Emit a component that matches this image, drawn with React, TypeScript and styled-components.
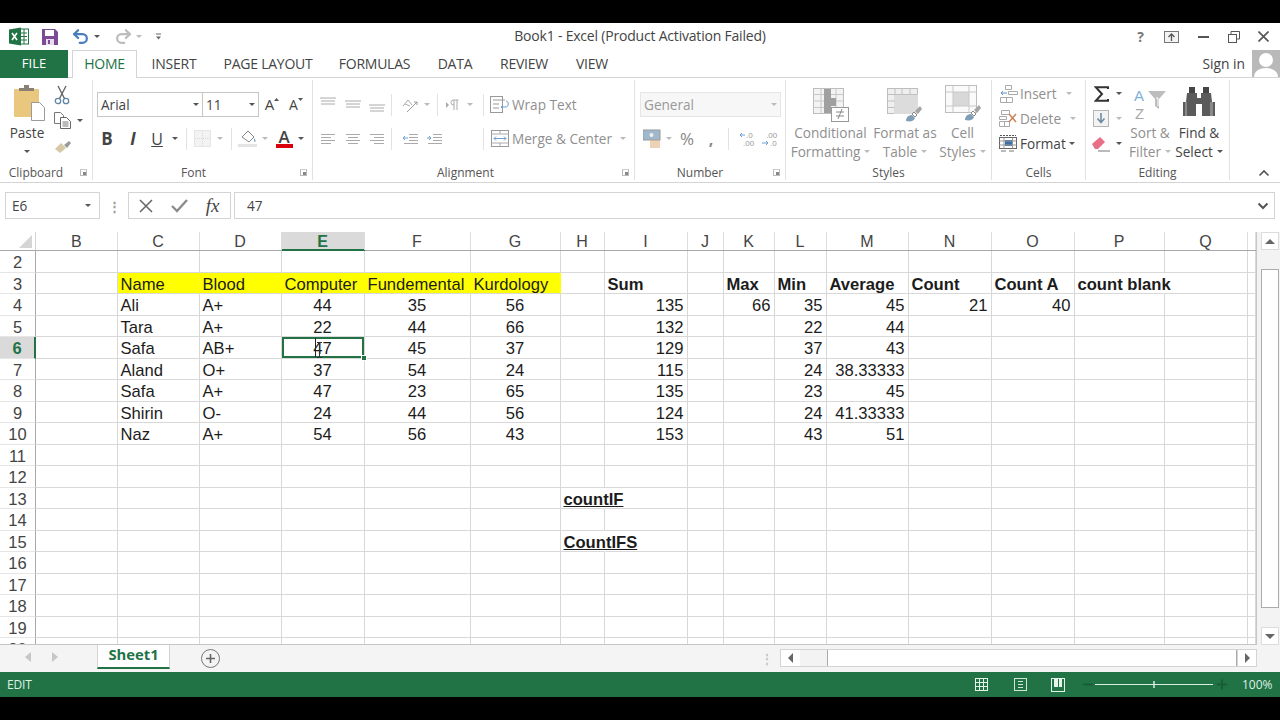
import React from "react";
import styled, { createGlobalStyle } from "styled-components";
import { Undo2, Redo2 } from "lucide-react";

const GREEN = "#217346";
const UI = `"Open Sans", "Noto Sans", "Liberation Sans", sans-serif`;
const SHEET = `"Liberation Sans", Arial, sans-serif`;

const Global = createGlobalStyle`
  html, body { margin: 0; padding: 0; background: #000; }
  * { box-sizing: border-box; }
`;

const Screen = styled.div`
  width: 1280px; height: 720px; background: #000;
  padding: 23px 0; overflow: hidden;
`;
const Win = styled.div`
  height: 674px; background: #fff; display: flex; flex-direction: column;
  font-family: ${UI}; color: #444; position: relative;
`;

/* ---------- Title bar ---------- */
const TitleBar = styled.div`
  height: 27px; flex: none; display: grid; grid-template-columns: 1fr 260px 1fr; align-items: center;
`;
const Qat = styled.div`display: flex; align-items: center; padding-left: 9px; height: 100%;`;
const Title = styled.div`
  font-size: 14px; letter-spacing: -0.2px; color: #444; text-align: center; white-space: nowrap; padding-bottom: 2px;
`;
const WinBtns = styled.div`display: flex; align-items: center; justify-content: flex-end; height: 100%; padding-right: 2px;`;
const Help = styled.span`font-size: 14px; font-weight: 700; color: #777; margin-right: 10px;`;

/* ---------- Tabs ---------- */
const TabRow = styled.div`
  height: 28px; flex: none; display: flex; align-items: stretch; border-bottom: 1px solid #d4d4d4; position: relative;
`;
const FileTab = styled.div`
  width: 68px; height: 28px; background: ${GREEN}; color: #fff; font-size: 13px; padding-bottom: 2px;
  display: flex; align-items: center; justify-content: center; margin-right: 4px;
`;
const Tab = styled.div<{ $w: number; $active?: boolean }>`
  width: ${(p) => p.$w}px; height: 28px; font-size: 14px; letter-spacing: -0.25px; padding-bottom: 2px;
  display: flex; align-items: center; justify-content: center;
  color: ${(p) => (p.$active ? GREEN : "#444")};
  background: ${(p) => (p.$active ? "#fff" : "transparent")};
  border: ${(p) => (p.$active ? "1px solid #d4d4d4" : "none")};
  border-bottom: none;
`;
const SignIn = styled.div`
  margin-left: auto; display: flex; align-items: center; gap: 7px; font-size: 13.8px; color: #444;
`;
const Avatar = styled.div`width: 28px; height: 27px; background: #b9b9b9; overflow: hidden; display: flex;`;

/* ---------- Ribbon ---------- */
const Ribbon = styled.div`
  height: 105px; flex: none; display: flex; border-bottom: 1px solid #d4d4d4; position: relative;
`;
const Group = styled.div<{ $w: number }>`
  width: ${(p) => p.$w}px; flex: none; height: 100px; display: flex; flex-direction: column;
  border-right: 1px solid #e2e2e2; margin-top: 2px;
`;
const GroupBody = styled.div<{ $top?: number; $left?: number; $row?: boolean }>`
  height: 84px; flex: none; display: flex; flex-direction: ${(p) => (p.$row ? "row" : "column")};
  padding-top: ${(p) => p.$top ?? 12}px; padding-left: ${(p) => p.$left ?? 0}px;
`;
const GroupLabel = styled.div<{ $pr?: number }>`
  height: 17px; flex: none; font-size: 12px; color: #555; position: relative; text-align: center; line-height: 17px;
  padding-right: ${(p) => p.$pr ?? 0}px;
`;
const Launcher = styled.span`
  position: absolute; right: 5px; top: 5px; width: 7px; height: 7px; border: 1px solid #bbb; border-top-color: #ccc;
  &::after { content: ""; position: absolute; right: 0; bottom: 0; width: 3px; height: 3px; background: #888; }
`;
const ToolRow = styled.div<{ $mt?: number; $pl?: number }>`
  height: 25px; display: flex; align-items: center; flex: none;
  margin-top: ${(p) => p.$mt ?? 0}px; padding-left: ${(p) => p.$pl ?? 0}px;
`;
const Slot = styled.span<{ $w: number }>`
  width: ${(p) => p.$w}px; flex: none; height: 100%; display: inline-flex; align-items: center; justify-content: center;
`;
const Sep = styled.span`width: 1px; height: 22px; background: #e2e2e2;`;
const Caret = styled.span<{ $dim?: boolean }>`
  display: inline-block; width: 0; height: 0; flex: none;
  border-left: 3px solid transparent; border-right: 3px solid transparent;
  border-top: 3px solid ${(p) => (p.$dim ? "#bbb" : "#555")};
`;
const Combo = styled.div<{ $w: number; $dim?: boolean }>`
  width: ${(p) => p.$w}px; height: 25px; flex: none; border: 1px solid ${(p) => (p.$dim ? "#e6e6e6" : "#c6c6c6")};
  background: ${(p) => (p.$dim ? "#f7f7f7" : "#fff")};
  display: flex; align-items: center; justify-content: space-between; padding: 0 3px;
  font-size: 13.6px; color: ${(p) => (p.$dim ? "#999" : "#444")};
  & + & { border-left: none; }
`;
const FontGlyph = styled.span<{ $bold?: boolean; $italic?: boolean; $under?: boolean; $size?: number; $serif?: boolean; $color?: string }>`
  font-family: ${(p) => (p.$serif ? `"Liberation Serif", serif` : UI)};
  font-size: ${(p) => p.$size ?? 15}px; line-height: 1; color: ${(p) => p.$color ?? "#444"};
  font-weight: ${(p) => (p.$bold ? 700 : 400)}; font-style: ${(p) => (p.$italic ? "italic" : "normal")};
  text-decoration: ${(p) => (p.$under ? "underline" : "none")};
`;
const ColorLetter = styled.span`
  display: flex; flex-direction: column; align-items: center; font-size: 17px; line-height: 15px; color: #444; font-weight: 600;
  &::after { content: ""; width: 17px; height: 4px; background: #d8000c; margin-top: 0; }
`;
const GrowWrap = styled.span`display: inline-flex; align-items: flex-start;`;
const RowLabel = styled.span<{ $dim?: boolean }>`
  font-size: 13.6px; white-space: nowrap; color: ${(p) => (p.$dim ? "#8f8f8f" : "#444")};
`;
const BigBtn = styled.div<{ $w: number }>`
  width: ${(p) => p.$w}px; flex: none; display: flex; flex-direction: column; align-items: center;
`;
const BigIcon = styled.div<{ $h?: number; $pt?: number; $pl?: number }>`
  height: ${(p) => p.$h ?? 38}px; flex: none; display: flex; align-items: flex-start; justify-content: center;
  padding-top: ${(p) => p.$pt ?? 0}px; padding-left: ${(p) => p.$pl ?? 0}px;
`;
const BigLine = styled.div<{ $dim?: boolean }>`
  height: 19px; line-height: 19px; font-size: 13.6px; white-space: nowrap; display: flex; align-items: center; gap: 4px;
  color: ${(p) => (p.$dim ? "#8f8f8f" : "#444")};
`;
const SmallCol = styled.div<{ $w: number; $mt?: number }>`
  width: ${(p) => p.$w}px; flex: none; display: flex; flex-direction: column; margin-top: ${(p) => p.$mt ?? 0}px;
`;
const Chevron = styled.div`position: absolute; left: 1258px; top: 91px; display: flex;`;

/* ---------- Formula bar ---------- */
const FormulaBar = styled.div`
  height: 27px; margin-top: 9px; flex: none; display: flex; align-items: stretch; padding-left: 5px; padding-right: 5px;
`;
const NameBox = styled.div`
  width: 95px; border: 1px solid #d4d4d4; display: flex; align-items: center; justify-content: space-between;
  padding: 0 8px 0 6px; font-size: 13.6px; color: #444;
`;
const Dots = styled.div`
  width: 28px; display: flex; align-items: center; justify-content: center; color: #999; font-size: 13px; font-weight: 700;
`;
const FxBox = styled.div`width: 103px; border: 1px solid #d4d4d4; display: flex; align-items: center;`;
const FormulaInput = styled.div`
  flex: 1; margin-left: 3px; border: 1px solid #d4d4d4; display: flex; align-items: center; justify-content: space-between;
  padding: 0 5px 0 12px; font-size: 13.6px; color: #444;
`;

/* ---------- Sheet ---------- */
const SheetArea = styled.div`height: 413px; margin-top: 13px; flex: none; display: flex;`;
const Grid = styled.div`
  width: 1257px; height: 413px; flex: none; display: flex; flex-direction: column; overflow: hidden;
  font-family: ${SHEET};
  border-right: 1px solid #c6c6c6; border-bottom: 1px solid #c6c6c6;
`;
const HeadRow = styled.div`height: 19px; flex: none; display: flex; border-bottom: 1px solid #a9a9a9;`;
const Corner = styled.div`
  width: 36px; flex: none; position: relative; border-right: 1px solid #d4d4d4;
  &::after { content: ""; position: absolute; right: 3px; bottom: 2px; width: 0; height: 0;
    border-left: 13px solid transparent; border-bottom: 13px solid #d5d5d5; }
`;
const ColHead = styled.div<{ $w: number; $sel?: boolean }>`
  width: ${(p) => p.$w}px; flex: none; display: flex; align-items: center; justify-content: center; padding-top: 1px;
  font-size: 16px; color: ${(p) => (p.$sel ? GREEN : "#444")}; font-weight: ${(p) => (p.$sel ? 700 : 400)};
  background: ${(p) => (p.$sel ? "#dadada" : "transparent")};
  border-right: 1px solid #dcdcdc;
  box-shadow: ${(p) => (p.$sel ? `0 1px 0 ${GREEN}, inset 0 -1px 0 ${GREEN}` : "none")};
  position: relative;
`;
const Row = styled.div`height: 21.5px; flex: none; display: flex;`;
const RowHead = styled.div<{ $sel?: boolean }>`
  width: 36px; flex: none; display: flex; align-items: center; justify-content: center; padding-top: 3px;
  font-size: 16.5px; color: ${(p) => (p.$sel ? GREEN : "#444")}; font-weight: ${(p) => (p.$sel ? 700 : 400)};
  background: ${(p) => (p.$sel ? "#dadada" : "#fff")};
  border-right: ${(p) => (p.$sel ? `2px solid ${GREEN}` : "1px solid #a9a9a9")};
  border-bottom: 1px solid #e6e6e6;
`;
const Cell = styled.div<{ $w: number; $a?: string; $b?: boolean; $y?: boolean; $u?: boolean; $open?: boolean; $sel?: boolean }>`
  width: ${(p) => p.$w}px; flex: none; display: flex; align-items: center; position: relative;
  white-space: nowrap; font-size: 16.6px; color: #1c1c1c; padding: 4px 3px 0;
  justify-content: ${(p) => (p.$a === "c" ? "center" : p.$a === "r" ? "flex-end" : "flex-start")};
  font-weight: ${(p) => (p.$b ? 700 : 400)};
  text-decoration: ${(p) => (p.$u ? "underline" : "none")};
  background: ${(p) => (p.$y ? "#ffff00" : "transparent")};
  border-right: 1px solid ${(p) => (p.$y || p.$open ? "transparent" : "#d8d8d8")};
  border-bottom: 1px solid #d8d8d8;
  box-shadow: ${(p) => (p.$sel ? `inset 0 0 0 2px ${GREEN}` : "none")};
`;
const Handle = styled.span`
  position: absolute; right: -3px; bottom: -3px; width: 6px; height: 6px; background: ${GREEN}; border: 1px solid #fff; z-index: 2;
`;
const TextCaret = styled.span`position: absolute; left: 33px; top: 1px; width: 1.5px; height: 19px; background: #222;`;
const IBeam = styled.svg`position: absolute; left: 34px; top: 5px;`;

/* ---------- Scrollbars ---------- */
const VScroll = styled.div`
  width: 23px; flex: none; height: 413px; background: #f3f3f3; display: flex; flex-direction: column; align-items: center;
  padding-left: 3px;
`;
const ScrollBtn = styled.div<{ $mt?: number }>`
  width: 18px; height: 18px; flex: none; background: #fff; border: 1px solid #dcdcdc; margin-top: ${(p) => p.$mt ?? 0}px;
  display: flex; align-items: center; justify-content: center;
`;
const ArrowUp = styled.span`width: 0; height: 0; border-left: 5px solid transparent; border-right: 5px solid transparent; border-bottom: 5px solid #666;`;
const ArrowDown = styled.span`width: 0; height: 0; border-left: 5px solid transparent; border-right: 5px solid transparent; border-top: 5px solid #666;`;
const VThumb = styled.div`width: 18px; height: 339px; flex: none; background: #fff; border: 1px solid #ababab; margin-top: 19px;`;

const SheetBar = styled.div`height: 27px; flex: none; display: flex; background: #f4f4f4;`;
const SheetNav = styled.div`width: 97px; flex: none; display: flex; align-items: center; padding-left: 25px; gap: 21px; height: 24px;`;
const NavArrow = styled.span<{ $right?: boolean }>`
  width: 0; height: 0; border-top: 5px solid transparent; border-bottom: 5px solid transparent;
  ${(p) => (p.$right ? "border-left: 6px solid #c6c6c6;" : "border-right: 6px solid #c6c6c6;")}
`;
const SheetTab = styled.div`
  width: 73px; height: 24px; flex: none; background: #fff; color: ${GREEN}; font-weight: 700; font-size: 14.8px; padding-bottom: 4px;
  border-left: 1px solid #d4d4d4; border-right: 1px solid #d4d4d4; border-bottom: 2px solid ${GREEN};
  display: flex; align-items: center; justify-content: center;
`;
const AddSheet = styled.div`
  width: 19px; height: 19px; margin: 4px 0 0 31px; border: 1px solid #777; border-radius: 50%; background: #f4f4f4; flex: none;
  display: flex; align-items: center; justify-content: center;
`;
const TabDots = styled.div`margin-left: 541px; width: 19px; color: #c4c4c4; font-size: 12px; font-weight: 700; display: flex; align-items: center; height: 26px;`;
const HScroll = styled.div`width: 477px; height: 18px; margin-top: 4px; flex: none; display: flex; align-items: stretch; border: 1px solid #d4d4d4; border-left: none; background: #f3f3f3;`;
const HBtn = styled.div<{ $w: number }>`width: ${(p) => p.$w}px; flex: none; display: flex; align-items: center; justify-content: center; background: #fff; border-left: 1px solid #d4d4d4;`;
const HGap = styled.div`width: 27px; flex: none;`;
const HThumb = styled.div`flex: 1; background: #fff; border: 1px solid #ababab; border-width: 0 1px;`;
const SmallLeft = styled.span`width: 0; height: 0; border-top: 5px solid transparent; border-bottom: 5px solid transparent; border-right: 5px solid #666;`;
const SmallRight = styled.span`width: 0; height: 0; border-top: 5px solid transparent; border-bottom: 5px solid transparent; border-left: 5px solid #666;`;

/* ---------- Status ---------- */
const Status = styled.div`
  height: 25px; flex: none; background: ${GREEN}; color: #dff0e6; display: flex; align-items: center; padding-left: 7px; font-size: 12px;
`;
const StatusText = styled.span`width: 958px; flex: none; letter-spacing: -0.2px;`;
const ViewSlot = styled.span<{ $w: number }>`width: ${(p) => p.$w}px; flex: none; display: flex; justify-content: center;`;
const ZoomPct = styled.span`margin-left: 15px; font-size: 12px;`;

/* ---------- Icons (drawings) ---------- */
const S = ({ w, h, children }: { w: number; h: number; children: React.ReactNode }) => (
  <svg width={w} height={h} viewBox={`0 0 ${w} ${h}`} fill="none" style={{ display: "block", flex: "none" }}>{children}</svg>
);
const ExcelLogo = () => (
  <S w={20} h={19}>
    <rect x={10} y={2} width={9.5} height={15} fill="#fff" stroke={GREEN} />
    <path d="M12 6h6M12 9.5h6M12 13h6M15 2v15" stroke={GREEN} />
    <path d="M0 2.5 12 .5v18L0 16.5z" fill={GREEN} />
    <path d="M3 6l5 7M8 6l-5 7" stroke="#fff" strokeWidth={1.6} />
  </S>
);
const SaveIcon = () => (
  <S w={16} h={16}>
    <path d="M0 0h13l3 3v13H0z" fill="#7d4a96" />
    <rect x={3} y={1} width={9} height={6} fill="#fff" />
    <rect x={4} y={10} width={8} height={6} fill="#e8dcef" />
    <rect x={6} y={11} width={2} height={4} fill="#7d4a96" />
  </S>
);
const Brush = ({ x = 0, y = 0 }: { x?: number; y?: number }) => (
  <g transform={`translate(${x} ${y})`}>
    <path d="M2 13c0-4 3-6 6-6l3 3c-1 3-4 4-9 3z" fill="#7f9fb8" />
    <path d="M8 6l2-2 3 3-2 2z" fill="#fff" stroke="#888" />
    <path d="M11 3l5-5 2 3-4 5z" fill="#a5a5a5" />
  </g>
);
const TableGrid = ({ dark }: { dark?: boolean }) => (
  <g>
    <rect x={.5} y={.5} width={30} height={25} fill="#f3f3f3" stroke="#bdbdbd" />
    <path d="M.5 6.5h30M.5 13h30M.5 19.5h30M8 .5v25M15 .5v25M23 .5v25" stroke="#c8c8c8" />
    {dark && <path d="M11 1h7v9h5v8h-5v7h-7z" fill="#a0a0a0" />}
  </g>
);
const CondIcon = () => (
  <S w={36} h={34}>
    <TableGrid dark />
    <rect x={18.5} y={19.5} width={17} height={14} fill="#fff" stroke="#999" />
    <path d="M23 24h8M23 28h8M29 21l-4 10" stroke="#888" />
  </S>
);
const FmtTableIcon = () => (
  <S w={36} h={34}>
    <rect x={.5} y={.5} width={30} height={25} fill="#efefef" stroke="#bdbdbd" />
    <rect x={7} y={6} width={24} height={20} fill="#dcdcdc" />
    <path d="M.5 6.5h30M.5 13h7M.5 19.5h7M8 .5v6M15 .5v6M23 .5v6" stroke="#c0c0c0" />
    <Brush x={17} y={20} />
  </S>
);
const CellStyleIcon = () => (
  <S w={36} h={36}>
    <rect x={.5} y={.5} width={31} height={27} fill="#fafafa" stroke="#bdbdbd" />
    <rect x={8} y={7} width={16} height={14} fill="#d8d8d8" />
    <path d="M8 .5v27M24 .5v27M.5 7h31M.5 21h31" stroke="#c8c8c8" />
    <Brush x={18} y={22} />
  </S>
);
const PasteIcon = () => (
  <S w={33} h={36}>
    <rect x={1} y={4} width={25} height={28} rx={1} fill="#e9c77f" />
    <path d="M6 6V3h5V0h5v3h5v3z" fill="#8a8073" />
    <path d="M18.5 17.5h8l5 5v13h-13z" fill="#fff" stroke="#9a9a9a" />
  </S>
);
const Scissors = () => (
  <S w={16} h={20}>
    <circle cx={4} cy={16} r={2.7} stroke="#5f86a8" strokeWidth={1.3} />
    <circle cx={12} cy={16} r={2.7} stroke="#5f86a8" strokeWidth={1.3} />
    <path d="M5.5 13.5 12 1M10.5 13.5 4 1" stroke="#666" strokeWidth={1.4} />
  </S>
);
const CopyIcon = () => (
  <S w={17} h={17}>
    <path d="M.5.5h6l3 3v8h-9z" fill="#fff" stroke="#777" />
    <path d="M6.5 5.5h6l4 4v7h-10z" fill="#fff" stroke="#666" />
    <path d="M8.5 10h6M8.5 12h6M8.5 14h6" stroke="#777" />
  </S>
);
const PainterIcon = () => (
  <S w={18} h={14}>
    <path d="M1 9l6-6 5 5-6 5z" fill="#d6c7a6" />
    <path d="M10 5l5-4 2 2-4 5z" fill="#999" />
  </S>
);
const AlignV = ({ top }: { top: number }) => (
  <S w={18} h={20}>
    <path d={`M1 ${top}h16M2 ${top + 3}h14M2 ${top + 6}h14`} stroke="#aaa" />
  </S>
);
const AlignH = ({ m }: { m: "l" | "c" | "r" }) => {
  const s = m === "l" ? [1, 1, 1, 1] : m === "c" ? [1, 3, 1, 3] : [1, 5, 1, 5];
  const w = [14, 10, 14, 10];
  return (
    <S w={16} h={14}>
      {[2, 5, 8, 11].map((y, i) => (
        <path key={y} d={`M${s[i]} ${y + .5}h${w[i]}`} stroke="#aaa" />
      ))}
    </S>
  );
};
const IndentIcon = ({ flip }: { flip?: boolean }) => (
  <S w={17} h={14}>
    <path d="M7 2.5h9M7 5.5h9M7 8.5h9M2 11.5h14" stroke="#aaa" />
    <path d={flip ? "M1 6h4M3 4l2 2-2 2" : "M6 6H1M3 4 1 6l2 2"} stroke="#6f9ed0" />
  </S>
);
const OrientIcon = () => (
  <S w={18} h={16}>
    <path d="M2 9l5-6 4 5M4 7l5 2" stroke="#aaa" />
    <path d="M6 15 16 5M13 5h3v3" stroke="#999" />
  </S>
);
const ParaIcon = () => (
  <S w={16} h={12}>
    <path d="M1 3l3 3-3 3z" fill="#aaa" />
    <path d="M9 1v10M12 1v10M13.5 1H8.5a2.5 2.5 0 0 0 0 5H9" stroke="#aaa" />
  </S>
);
const WrapIcon = () => (
  <S w={20} h={18}>
    <rect x={.5} y={.5} width={12} height={16} fill="#fff" stroke="#999" />
    <path d="M3 4h12M3 8h6M3 12h6" stroke="#999" />
    <path d="M16 5c3 0 3 6 0 6h-4M13 9l-2 2 2 2" stroke="#6f9ed0" />
  </S>
);
const MergeIcon = () => (
  <S w={19} h={18}>
    <rect x={.5} y={.5} width={17} height={16} fill="#fff" stroke="#999" />
    <path d="M.5 4h17M.5 13h17M9 .5V4M9 13v3.5" stroke="#aaa" />
    <path d="M3 8.5h12M5 6.5 3 8.5l2 2M13 6.5l2 2-2 2" stroke="#6f9ed0" />
  </S>
);
const BordersIcon = () => (
  <S w={17} h={17}>
    <rect x={.5} y={.5} width={16} height={16} stroke="#ccc" strokeDasharray="1 1" />
    <path d="M8.5 1v15M1 8.5h15" stroke="#ccc" strokeDasharray="1 1" />
    <rect x={1} y={1} width={15} height={15} fill="#e7e7e7" opacity={.5} />
  </S>
);
const FillIcon = () => (
  <S w={20} h={19}>
    <path d="M4 8l6-6 6 6-5 5z" fill="#fff" stroke="#888" />
    <path d="M16 9c2 2 2 4 1 4s-1-2-1-4z" fill="#7da7c7" />
    <rect x={0} y={15} width={19} height={3} fill="#e4e4e4" />
  </S>
);
const GrowFont = ({ up }: { up?: boolean }) => (
  <GrowWrap>
    <FontGlyph $size={up ? 15 : 14}>A</FontGlyph>
    <S w={5} h={4}>
      <path d={up ? "M0 4l2.5-3L5 4z" : "M0 0l2.5 3L5 0z"} fill="#555" />
    </S>
  </GrowWrap>
);
const AcctIcon = () => (
  <S w={18} h={20}>
    <rect x={0} y={1} width={17} height={10} fill="#9fb8cc" stroke="#999" />
    <circle cx={8.5} cy={6} r={2} fill="#eee" />
    <path d="M7 12h10M7 14h10M7 16h10M7 18h10" stroke="#d9a46c" />
  </S>
);
const DecIcon = ({ inc }: { inc?: boolean }) => (
  <S w={18} h={18}>
    <text x={inc ? 5 : 7} y={8} fontSize={8} fontFamily={SHEET} fill="#999">{inc ? ".00" : ".0"}</text>
    <text x={inc ? 9 : 4} y={16} fontSize={8} fontFamily={SHEET} fill="#999">{inc ? ".0" : ".00"}</text>
    {inc
      ? <path d="M1 13h6M5 11l2 2-2 2" stroke="#6f9ed0" />
      : <path d="M6 5H1M3 3 1 5l2 2" stroke="#6f9ed0" />}
  </S>
);
const InsertIcon = () => (
  <S w={18} h={18}>
    <path d="M5.5.5h6v4h-6zM.5 12.5h12v5H.5zM6.5 12.5v5M8.5 6.5h9v3h-9z" stroke="#aaa" />
    <path d="M7 8H1M3 6 1 8l2 2" stroke="#5f8fc2" />
  </S>
);
const DeleteIcon = () => (
  <S w={19} h={18}>
    <path d="M2.5.5h8v4h-8zM.5 11.5h10v5H.5zM5.5 11.5v5M.5 6.5h7v3h-7z" stroke="#aaa" />
    <path d="M10 4l7 8M17 4l-7 8" stroke="#c8835e" strokeWidth={1.5} />
  </S>
);
const FormatIcon = () => (
  <S w={19} h={19}>
    <path d="M1 1.5h16" stroke="#555" strokeDasharray="2 1" />
    <rect x={.5} y={3.5} width={17} height={11} fill="#fff" stroke="#666" />
    <rect x={6} y={6} width={7} height={6} fill="#3d6fa5" />
    <path d="M.5 7h17M.5 11h17M5 3.5v11M13.5 3.5v11" stroke="#999" />
    <path d="M2 17h5M10 17h5" stroke="#777" />
  </S>
);
const SigmaIcon = () => (
  <S w={15} h={16}>
    <path d="M14 3V1.3H1.8L8 8 1.8 14.7H14V13" stroke="#333" strokeWidth={2} />
  </S>
);
const FillDown = () => (
  <S w={16} h={17}>
    <rect x={.5} y={.5} width={15} height={16} fill="#f3f3f3" stroke="#b5b5b5" />
    <path d="M8 3v9M4.5 8.5 8 12.5l3.5-4" stroke="#6e8da5" strokeWidth={1.6} />
  </S>
);
const EraserIcon = () => (
  <S w={20} h={16}>
    <path d="M1 8l8-7 5 5-7 7H4z" fill="#e76f86" />
    <path d="M7 15h12" stroke="#777" />
  </S>
);
const SortIcon = () => (
  <S w={34} h={36}>
    <text x={1} y={14} fontSize={15} fontFamily={SHEET} fill="#7fb2d9">A</text>
    <text x={2} y={31.5} fontSize={15} fontFamily={SHEET} fill="#a8a8a8">Z</text>
    <path d="M15 4h18l-7 8v10l-4-3v-7z" fill="#bdbdbd" />
    <path d="M23 11h2v8" stroke="#fff" />
  </S>
);
const BinocIcon = () => (
  <S w={32} h={31}>
    <path d="M6 0h6v6H6zM20 0h6v6h-6z" fill="#444" />
    <path d="M4 6h10v5h4V6h10l1 9h3v14H19V17h-6v12H0V15h3z" fill="#5b5b5b" />
    <path d="M2 15h2v14H2zM27 15h3v14h-3z" fill="#8a8a8a" />
  </S>
);
const ChevronUp = () => (
  <S w={12} h={8}><path d="M1.5 6.5 6 2l4.5 4.5" stroke="#555" strokeWidth={1.6} /></S>
);
const ChevronDown = () => (
  <S w={12} h={8}><path d="M1.5 1.5 6 6l4.5-4.5" stroke="#555" strokeWidth={2} /></S>
);
const CancelIcon = () => (
  <S w={14} h={14}><path d="M1 1l12 12M13 1 1 13" stroke="#666" strokeWidth={1.5} /></S>
);
const EnterIcon = () => (
  <S w={17} h={14}><path d="M1 7l5 5L16 1" stroke="#8c8c8c" strokeWidth={2.4} /></S>
);
const RibbonDisplay = () => (
  <S w={15} h={12}>
    <rect x={.5} y={.5} width={14} height={11} stroke="#777" fill="#f3f3f3" />
    <path d="M7.5 10V3M4.5 6l3-3 3 3" stroke="#555" strokeWidth={1.3} />
  </S>
);
const MinIcon = () => <S w={11} h={4}><path d="M0 2h11" stroke="#555" strokeWidth={2} /></S>;
const RestoreIcon = () => (
  <S w={12} h={12}>
    <path d="M3 3V.5h8.5V8H9" stroke="#555" />
    <rect x={.5} y={3.5} width={8} height={8} stroke="#555" fill="#fff" />
  </S>
);
const CloseIcon = () => <S w={11} h={11}><path d="M.5.5l10 10M10.5.5l-10 10" stroke="#555" strokeWidth={1.6} /></S>;
const CustomizeIcon = () => (
  <S w={7} h={7}>
    <path d="M1 1h5" stroke="#666" />
    <path d="M1 3.5h5L3.5 6.5z" fill="#666" />
  </S>
);
const AvatarFigure = () => (
  <S w={28} h={27}>
    <circle cx={14} cy={10} r={7} fill="#fff" />
    <path d="M2 27c0-6 6-9 12-9s12 3 12 9z" fill="#fff" />
  </S>
);
const Plus = () => <S w={11} h={11}><path d="M5.5 1v9M1 5.5h9" stroke="#666" strokeWidth={1.6} /></S>;
const GridView = () => (
  <S w={13} h={13}><rect x={.5} y={.5} width={12} height={12} stroke="#e4f2e9" /><path d="M4.5 0v13M8.5 0v13M0 4.5h13M0 8.5h13" stroke="#e4f2e9" /></S>
);
const PageView = () => (
  <S w={13} h={13}><rect x={.5} y={.5} width={12} height={12} stroke="#cfe5d6" /><path d="M4 3.5h5M4 6.5h5M4 9.5h5" stroke="#cfe5d6" /></S>
);
const BreakView = () => (
  <S w={14} h={14}><rect x={.5} y={.5} width={13} height={13} stroke="#e4f2e9" /><path d="M3 1h4v8H3zM8 1h3v8H8z" fill="#e4f2e9" /></S>
);
const ZoomSlider = () => (
  <S w={144} h={13}>
    <path d="M0 6.5h10" stroke="#175d36" strokeWidth={2} />
    <path d="M12 6.5h118" stroke="#d8ece0" />
    <path d="M71 3v7" stroke="#d8ece0" strokeWidth={1.5} />
    <path d="M134 6.5h10M139 1.5v10" stroke="#175d36" strokeWidth={2} />
  </S>
);

/* ---------- Data ---------- */
const COLS: [string, number][] = [
  ["B", 81.5], ["C", 82], ["D", 82], ["E", 83], ["F", 106], ["G", 90], ["H", 44], ["I", 83], ["J", 36],
  ["K", 51], ["L", 52], ["M", 82], ["N", 83], ["O", 83], ["P", 90], ["Q", 83], ["", 8.5],
];
type C = { t: string; a?: string; b?: boolean; y?: boolean; u?: boolean; open?: boolean };
const people: [string, string, number, number, number, number, number, string][] = [
  ["Ali", "A+", 44, 35, 56, 135, 35, "45"],
  ["Tara", "A+", 22, 44, 66, 132, 22, "44"],
  ["Safa", "AB+", 47, 45, 37, 129, 37, "43"],
  ["Aland", "O+", 37, 54, 24, 115, 24, "38.33333"],
  ["Safa", "A+", 47, 23, 65, 135, 23, "45"],
  ["Shirin", "O-", 24, 44, 56, 124, 24, "41.33333"],
  ["Naz", "A+", 54, 56, 43, 153, 43, "51"],
];
const cells: Record<string, C> = {
  C3: { t: "Name", y: true }, D3: { t: "Blood", y: true }, E3: { t: "Computer", y: true },
  F3: { t: "Fundemental", y: true }, G3: { t: "Kurdology", y: true },
  I3: { t: "Sum", b: true }, K3: { t: "Max", b: true }, L3: { t: "Min", b: true }, M3: { t: "Average", b: true },
  N3: { t: "Count", b: true }, O3: { t: "Count A", b: true }, P3: { t: "count blank", b: true, open: true },
  K4: { t: "66", a: "r" }, N4: { t: "21", a: "r" }, O4: { t: "40", a: "r" },
  H13: { t: "countIF", b: true, u: true, open: true }, H15: { t: "CountIFS", b: true, u: true, open: true },
};
people.forEach((p, i) => {
  const r = i + 4;
  cells[`C${r}`] = { t: p[0] };
  cells[`D${r}`] = { t: p[1] };
  cells[`E${r}`] = { t: String(p[2]), a: "c" };
  cells[`F${r}`] = { t: String(p[3]), a: "c" };
  cells[`G${r}`] = { t: String(p[4]), a: "c" };
  cells[`I${r}`] = { t: String(p[5]), a: "r" };
  cells[`L${r}`] = { t: String(p[6]), a: "r" };
  cells[`M${r}`] = { t: p[7], a: "r" };
});
const ROWS = Array.from({ length: 19 }, (_, i) => i + 2);

export default function App() {
  return (
    <Screen>
      <Global />
      <Win>
        <TitleBar>
          <Qat>
            <ExcelLogo />
            <Slot $w={41}><SaveIcon /></Slot>
            <Slot $w={21}><Undo2 size={19} color="#4a7ebb" strokeWidth={2.8} /></Slot>
            <Slot $w={11}><Caret /></Slot>
            <Slot $w={10} />
            <Slot $w={22}><Redo2 size={19} color="#bcbcbc" strokeWidth={2.8} /></Slot>
            <Slot $w={10}><Caret $dim /></Slot>
            <Slot $w={28}><CustomizeIcon /></Slot>
          </Qat>
          <Title>Book1 - Excel (Product Activation Failed)</Title>
          <WinBtns>
            <Help>?</Help>
            <Slot $w={34}><RibbonDisplay /></Slot>
            <Slot $w={31}><MinIcon /></Slot>
            <Slot $w={30}><RestoreIcon /></Slot>
            <Slot $w={29}><CloseIcon /></Slot>
          </WinBtns>
        </TitleBar>

        <TabRow>
          <FileTab>FILE</FileTab>
          <Tab $w={65} $active>HOME</Tab>
          <Tab $w={74}>INSERT</Tab>
          <Tab $w={114}>PAGE LAYOUT</Tab>
          <Tab $w={99}>FORMULAS</Tab>
          <Tab $w={62}>DATA</Tab>
          <Tab $w={76}>REVIEW</Tab>
          <Tab $w={60}>VIEW</Tab>
          <SignIn>Sign in<Avatar><AvatarFigure /></Avatar></SignIn>
        </TabRow>

        <Ribbon>
          <Group $w={93}>
            <GroupBody $row $top={5}>
              <BigBtn $w={54}>
                <BigIcon $pl={5}><PasteIcon /></BigIcon>
                <BigLine>Paste</BigLine>
                <BigLine><Caret /></BigLine>
              </BigBtn>
              <SmallCol $w={38} $mt={-3}>
                <ToolRow><Slot $w={16}><Scissors /></Slot></ToolRow>
                <ToolRow $mt={1}><Slot $w={16}><CopyIcon /></Slot><Slot $w={20}><Caret /></Slot></ToolRow>
                <ToolRow $mt={1}><Slot $w={18}><PainterIcon /></Slot></ToolRow>
              </SmallCol>
            </GroupBody>
            <GroupLabel $pr={20}>Clipboard<Launcher /></GroupLabel>
          </Group>

          <Group $w={220}>
            <GroupBody>
              <ToolRow $pl={4}>
                <Combo $w={106}>Arial<Caret /></Combo>
                <Combo $w={56}>11<Caret /></Combo>
                <Slot $w={1} />
                <Slot $w={24}><GrowFont up /></Slot>
                <Slot $w={24}><GrowFont /></Slot>
              </ToolRow>
              <ToolRow $mt={9} $pl={2}>
                <Slot $w={24}><FontGlyph $bold $size={17}>B</FontGlyph></Slot>
                <Slot $w={28}><FontGlyph $italic $bold $size={17}>I</FontGlyph></Slot>
                <Slot $w={20}><FontGlyph $under $size={16}>U</FontGlyph></Slot>
                <Slot $w={16}><Caret /></Slot>
                <Slot $w={7}><Sep /></Slot>
                <Slot $w={24}><BordersIcon /></Slot>
                <Slot $w={12}><Caret $dim /></Slot>
                <Slot $w={10}><Sep /></Slot>
                <Slot $w={24}><FillIcon /></Slot>
                <Slot $w={10}><Caret $dim /></Slot>
                <Slot $w={2} />
                <Slot $w={24}><ColorLetter>A</ColorLetter></Slot>
                <Slot $w={10}><Caret /></Slot>
              </ToolRow>
            </GroupBody>
            <GroupLabel $pr={18}>Font<Launcher /></GroupLabel>
          </Group>

          <Group $w={322}>
            <GroupBody>
              <ToolRow $pl={3}>
                <Slot $w={24}><AlignV top={3} /></Slot>
                <Slot $w={25}><AlignV top={6} /></Slot>
                <Slot $w={24}><AlignV top={10} /></Slot>
                <Slot $w={4}><Sep /></Slot>
                <Slot $w={5} />
                <Slot $w={24}><OrientIcon /></Slot>
                <Slot $w={10}><Caret $dim /></Slot>
                <Slot $w={10}><Sep /></Slot>
                <Slot $w={1} />
                <Slot $w={20}><ParaIcon /></Slot>
                <Slot $w={14}><Caret $dim /></Slot>
                <Slot $w={12}><Sep /></Slot>
                <Slot $w={22}><WrapIcon /></Slot>
                <Slot $w={1} />
                <RowLabel $dim>Wrap Text</RowLabel>
              </ToolRow>
              <ToolRow $mt={9} $pl={3}>
                <Slot $w={24}><AlignH m="l" /></Slot>
                <Slot $w={25}><AlignH m="c" /></Slot>
                <Slot $w={24}><AlignH m="r" /></Slot>
                <Slot $w={4}><Sep /></Slot>
                <Slot $w={5} />
                <Slot $w={24}><IndentIcon /></Slot>
                <Slot $w={25}><IndentIcon flip /></Slot>
                <Slot $w={30} />
                <Slot $w={12}><Sep /></Slot>
                <Slot $w={22}><MergeIcon /></Slot>
                <Slot $w={1} />
                <RowLabel $dim>Merge &amp; Center</RowLabel>
                <Slot $w={22}><Caret $dim /></Slot>
              </ToolRow>
            </GroupBody>
            <GroupLabel $pr={16}>Alignment<Launcher /></GroupLabel>
          </Group>

          <Group $w={151}>
            <GroupBody>
              <ToolRow $pl={5}><Combo $w={141} $dim>General<Caret $dim /></Combo></ToolRow>
              <ToolRow $mt={9} $pl={5}>
                <Slot $w={24}><AcctIcon /></Slot>
                <Slot $w={9}><Caret $dim /></Slot>
                <Slot $w={28}><FontGlyph $size={17} $color="#888">%</FontGlyph></Slot>
                <Slot $w={20}><FontGlyph $size={16} $bold $color="#888">,</FontGlyph></Slot>
                <Slot $w={14}><Sep /></Slot>
                <Slot $w={2} />
                <Slot $w={22}><DecIcon /></Slot>
                <Slot $w={22}><DecIcon inc /></Slot>
              </ToolRow>
            </GroupBody>
            <GroupLabel $pr={20}>Number<Launcher /></GroupLabel>
          </Group>

          <Group $w={206}>
            <GroupBody $row $top={5} $left={4}>
              <BigBtn $w={81}>
                <BigIcon $pt={3}><CondIcon /></BigIcon>
                <BigLine $dim>Conditional</BigLine>
                <BigLine $dim>Formatting<Caret $dim /></BigLine>
              </BigBtn>
              <BigBtn $w={68}>
                <BigIcon $pt={3}><FmtTableIcon /></BigIcon>
                <BigLine $dim>Format as</BigLine>
                <BigLine $dim>Table<Caret $dim /></BigLine>
              </BigBtn>
              <BigBtn $w={47}>
                <BigIcon><CellStyleIcon /></BigIcon>
                <BigLine $dim>Cell</BigLine>
                <BigLine $dim>Styles<Caret $dim /></BigLine>
              </BigBtn>
            </GroupBody>
            <GroupLabel>Styles</GroupLabel>
          </Group>

          <Group $w={94}>
            <GroupBody $top={1} $left={6}>
              <ToolRow><Slot $w={21}><InsertIcon /></Slot><Slot $w={1} /><RowLabel $dim>Insert</RowLabel><Slot $w={24}><Caret $dim /></Slot></ToolRow>
              <ToolRow><Slot $w={21}><DeleteIcon /></Slot><Slot $w={1} /><RowLabel $dim>Delete</RowLabel><Slot $w={24}><Caret $dim /></Slot></ToolRow>
              <ToolRow><Slot $w={21}><FormatIcon /></Slot><Slot $w={1} /><RowLabel>Format</RowLabel><Slot $w={12}><Caret /></Slot></ToolRow>
            </GroupBody>
            <GroupLabel>Cells</GroupLabel>
          </Group>

          <Group $w={144}>
            <GroupBody $row $top={2}>
              <SmallCol $w={41} $mt={-1}>
                <ToolRow $pl={7}><Slot $w={16}><SigmaIcon /></Slot><Slot $w={20}><Caret /></Slot></ToolRow>
                <ToolRow $pl={7}><Slot $w={16}><FillDown /></Slot><Slot $w={20}><Caret $dim /></Slot></ToolRow>
                <ToolRow $pl={5}><Slot $w={20}><EraserIcon /></Slot><Slot $w={16}><Caret /></Slot></ToolRow>
              </SmallCol>
              <BigBtn $w={46}>
                <BigIcon $h={41} $pt={5}><SortIcon /></BigIcon>
                <BigLine $dim>Sort &amp;</BigLine>
                <BigLine $dim>Filter<Caret $dim /></BigLine>
              </BigBtn>
              <BigBtn $w={52}>
                <BigIcon $h={41} $pt={5}><BinocIcon /></BigIcon>
                <BigLine>Find &amp;</BigLine>
                <BigLine>Select<Caret /></BigLine>
              </BigBtn>
            </GroupBody>
            <GroupLabel>Editing</GroupLabel>
          </Group>
          <Chevron><ChevronUp /></Chevron>
        </Ribbon>

        <FormulaBar>
          <NameBox>E6<Caret /></NameBox>
          <Dots>⋮</Dots>
          <FxBox>
            <Slot $w={33}><CancelIcon /></Slot>
            <Slot $w={35}><EnterIcon /></Slot>
            <Slot $w={31}><FontGlyph $serif $italic $size={19}>fx</FontGlyph></Slot>
          </FxBox>
          <FormulaInput>47<ChevronDown /></FormulaInput>
        </FormulaBar>

        <SheetArea>
          <Grid>
            <HeadRow>
              <Corner />
              {COLS.map(([c, w]) => (
                <ColHead key={c || "end"} $w={w} $sel={c === "E"}>{c}</ColHead>
              ))}
            </HeadRow>
            {ROWS.map((r) => (
              <Row key={r}>
                <RowHead $sel={r === 6}>{r}</RowHead>
                {COLS.map(([c, w]) => {
                  const d = cells[`${c}${r}`];
                  const sel = c === "E" && r === 6;
                  return (
                    <Cell key={c || "end"} $w={w} $a={d?.a} $b={d?.b} $y={d?.y} $u={d?.u} $open={d?.open} $sel={sel}>
                      {d?.t}
                      {sel && (
                        <>
                          <TextCaret />
                          <IBeam width="7" height="16" viewBox="0 0 7 16" fill="none">
                            <path d="M1 .5h2l.5.5.5-.5h2M3.5 1v14M1 15.5h2l.5-.5.5.5h2" stroke="#333" />
                          </IBeam>
                          <Handle />
                        </>
                      )}
                    </Cell>
                  );
                })}
              </Row>
            ))}
          </Grid>
          <VScroll>
            <ScrollBtn><ArrowUp /></ScrollBtn>
            <VThumb />
            <ScrollBtn $mt={19}><ArrowDown /></ScrollBtn>
          </VScroll>
        </SheetArea>

        <SheetBar>
          <SheetNav><NavArrow /><NavArrow $right /></SheetNav>
          <SheetTab>Sheet1</SheetTab>
          <AddSheet><Plus /></AddSheet>
          <TabDots>⋮</TabDots>
          <HScroll>
            <HBtn $w={20}><SmallLeft /></HBtn>
            <HGap />
            <HThumb />
            <HBtn $w={19}><SmallRight /></HBtn>
          </HScroll>
        </SheetBar>

        <Status>
          <StatusText>EDIT</StatusText>
          <ViewSlot $w={32}><GridView /></ViewSlot>
          <ViewSlot $w={46}><PageView /></ViewSlot>
          <ViewSlot $w={30}><BreakView /></ViewSlot>
          <ViewSlot $w={10} />
          <ZoomSlider />
          <ZoomPct>100%</ZoomPct>
        </Status>
      </Win>
    </Screen>
  );
}
